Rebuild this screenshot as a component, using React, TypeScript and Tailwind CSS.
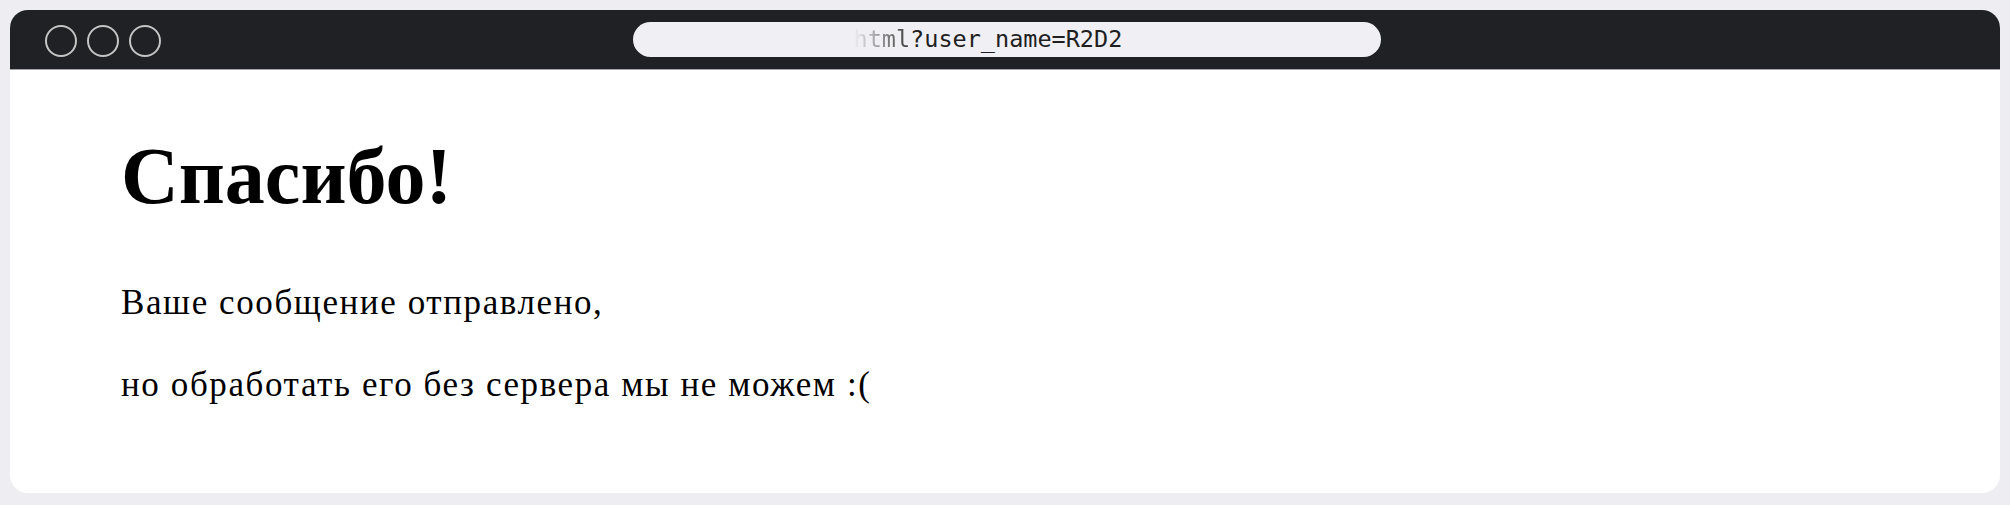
export default function App() {
  return (
    <div className="min-h-[505px] bg-[#eeedf2] px-[10px] pt-[10px] pb-[12px]">
      <div className="h-[483px] overflow-hidden rounded-[18px] bg-white">
        {/* Browser bar */}
        <div className="grid h-[60px] grid-cols-[1fr_751px_1fr] items-center border-b border-[#a4a4aa] bg-[#202124]">
          <div className="flex items-center gap-[10px] pl-[35px] pt-[3px]">
            <span className="h-[32px] w-[32px] rounded-full border-[2.5px] border-[#c4c4c4]" />
            <span className="h-[32px] w-[32px] rounded-full border-[2.5px] border-[#c4c4c4]" />
            <span className="h-[32px] w-[32px] rounded-full border-[2.5px] border-[#c4c4c4]" />
          </div>
          <div className="ml-[3px] flex h-[35px] items-center rounded-full bg-[#efeff4] pl-[221px] font-['DejaVu_Sans_Mono',monospace] text-[23.5px] leading-none text-[#1f1f1f]">
            <span className="bg-linear-to-r from-[#efeff4] to-[#3a3a3a] bg-clip-text text-transparent">html</span>
            <span>?user_name=R2D2</span>
          </div>
          <div />
        </div>

        {/* Page content */}
        <div className="pl-[111px] pt-[66px] font-['Liberation_Serif','Times_New_Roman',serif] text-black">
          <h1 className="text-[80px] font-bold leading-[80px]">Спасибо!</h1>
          <p className="mt-[69px] text-[35px] leading-[35px] tracking-[1.6px]">Ваше сообщение отправлено,</p>
          <p className="mt-[47px] text-[35px] leading-[35px] tracking-[1.6px]">но обработать его без сервера мы не можем :(</p>
        </div>
      </div>
    </div>
  )
}
